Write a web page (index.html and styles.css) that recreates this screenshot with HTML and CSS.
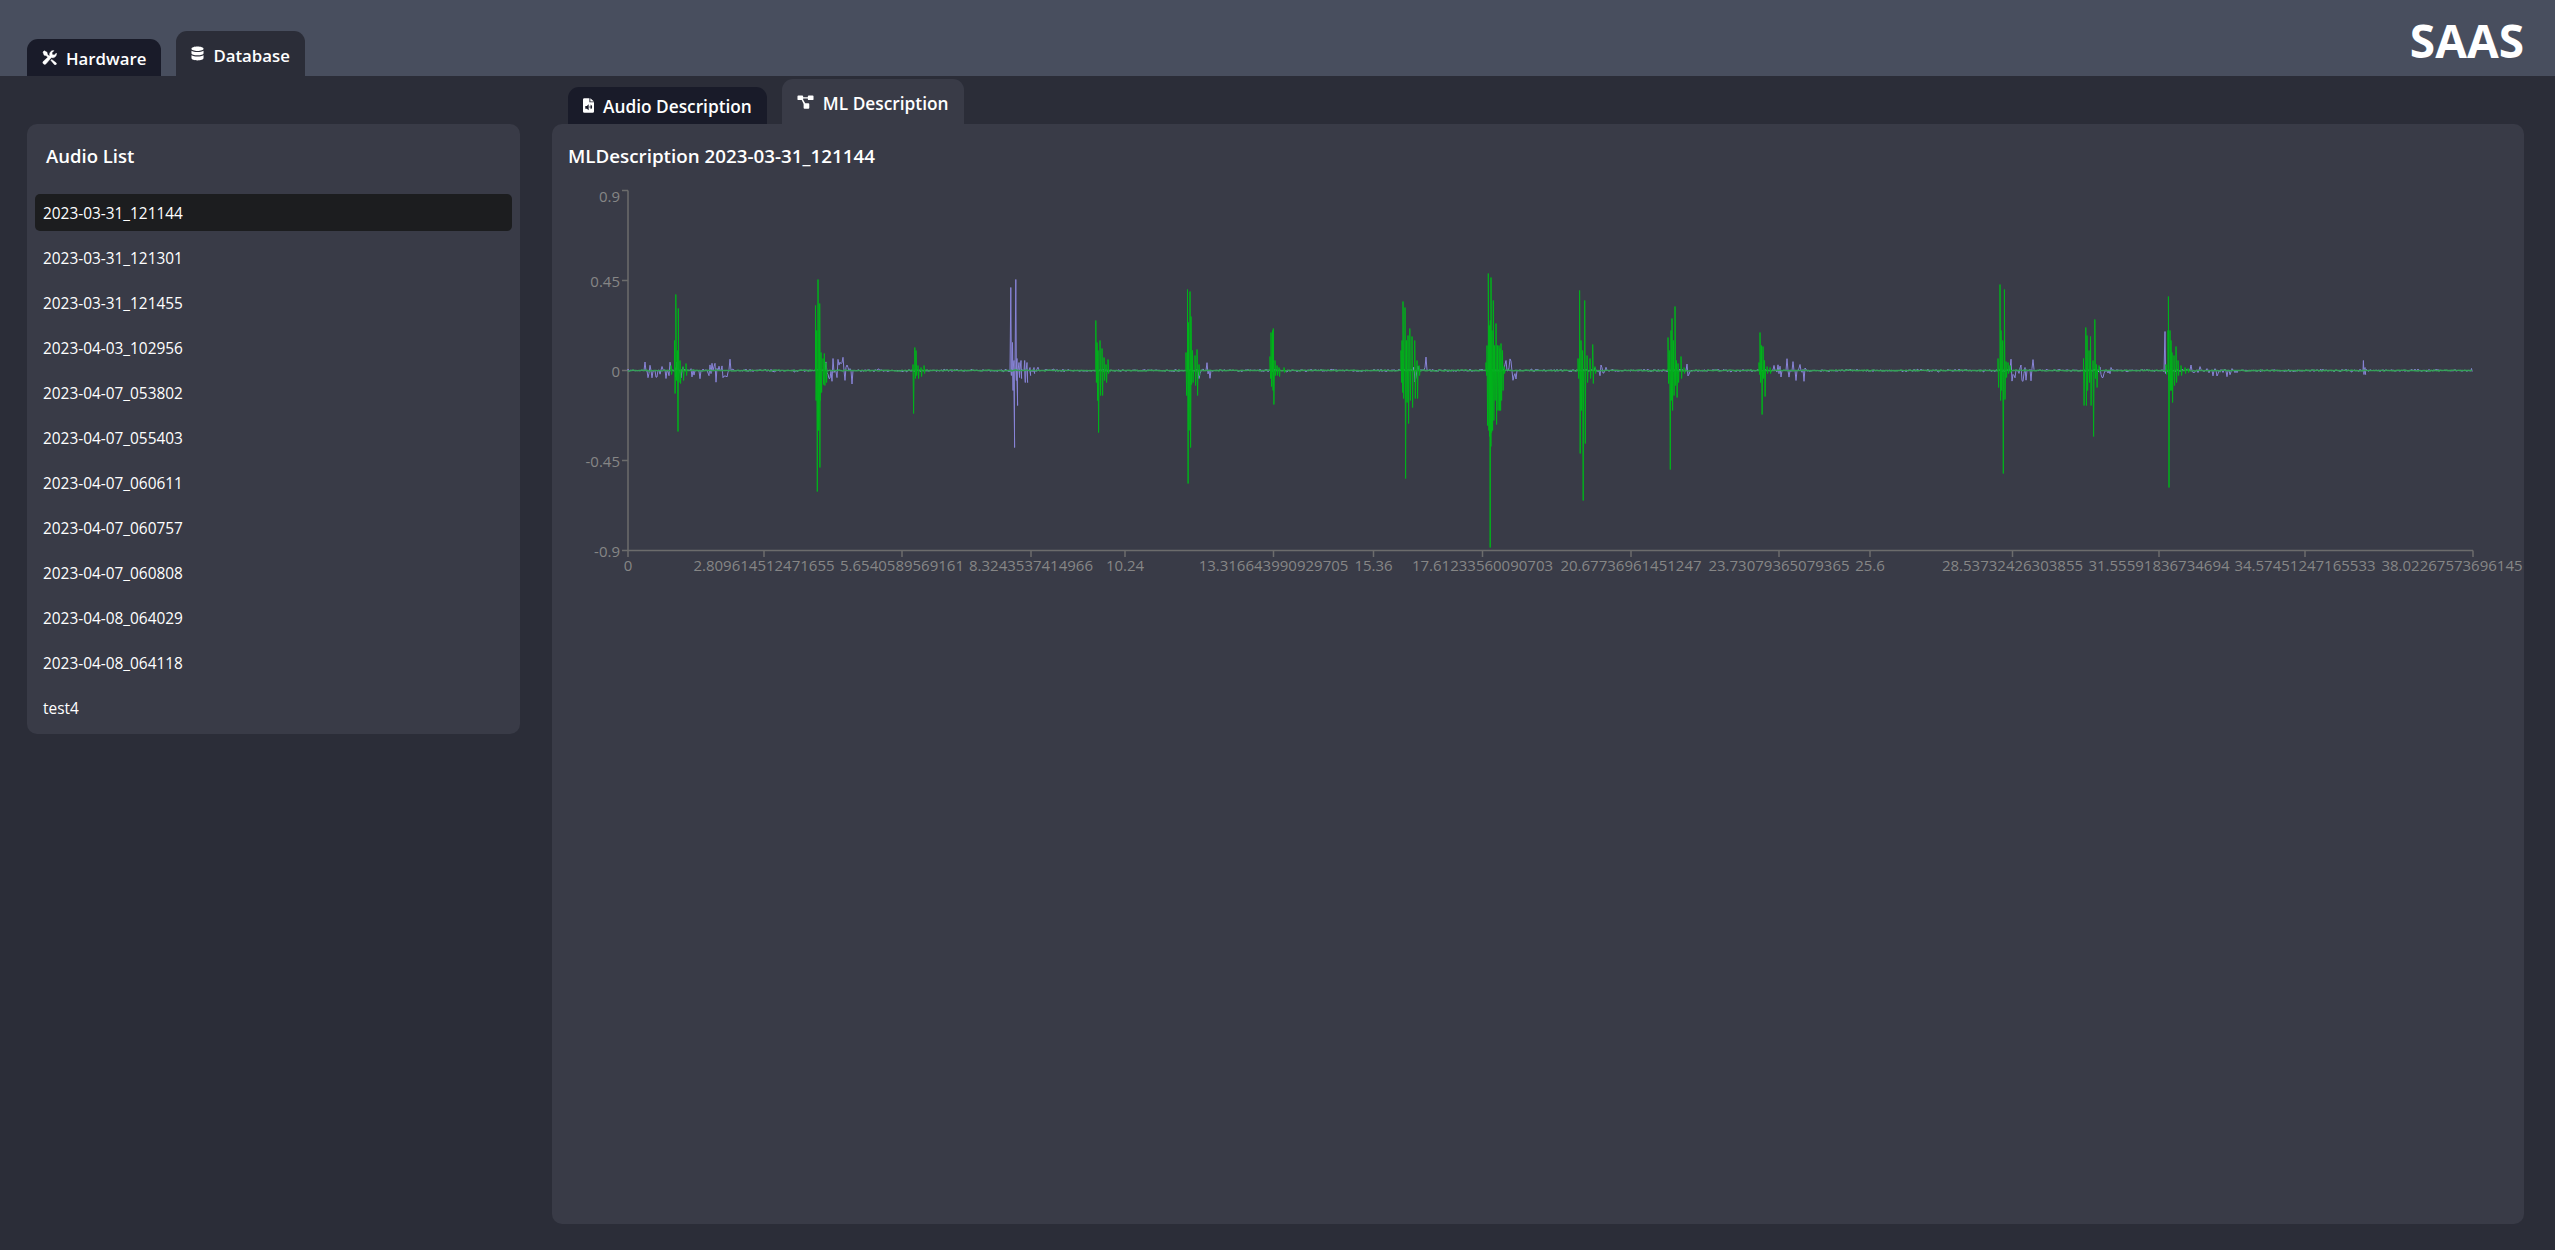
FILE: index.html
```html
<!DOCTYPE html>
<html lang="en">
<head>
    <meta charset="UTF-8">
    <meta name="viewport" content="width=device-width, initial-scale=1.0">
    <title>SAAS</title>
    <link rel="stylesheet" href="styles.css">
</head>
<body>
    <header class="topbar">
        <nav class="tabs main-tabs">
            <a class="tab">
                <svg class="icon tools-icon" viewBox="0 0 16 16"><path d="M1 2.2 2.4.8l3 1.7.3 2 3 3-1.4 1.4-3-3-2-.3zM11.8.6a4 4 0 0 1 .9.1L10.600 2.800l.4 2.200 2.200.4 2.100-2.100a4 4 0 0 1-5.300 4.700L4.300 14.700a1.700 1.700 0 0 1-2.800-2.600l6.800-6.300A4 4 0 0 1 11.800.6zM10.300 10l4.700 3.700a1.200 1.200 0 0 1-1.800 1.800L9.400 10.900z"/></svg>
                Hardware
            </a>
            <a class="tab active">
                <svg class="icon db-icon" viewBox="0 0 14 16"><path d="M7 .5c3.600 0 6.500 1 6.500 2.400S10.600 5.300 7 5.300.5 4.300.5 2.900 3.400.5 7 .5zM.5 5c1.400 1 3.900 1.500 6.500 1.500S12.100 6 13.500 5v2.600C13.500 9 10.600 10 7 10S.5 9 .5 7.600zM.5 9.800c1.400 1 3.900 1.500 6.500 1.500s5.100-.5 6.500-1.500v3.100C13.500 14.400 10.600 15.500 7 15.500S.5 14.400.5 12.900z"/></svg>
                Database
            </a>
        </nav>
        <h1 class="brand">SAAS</h1>
    </header>

    <div class="content">
        <aside class="card sidebar">
            <h2 class="card-title">Audio List</h2>
            <ul class="audio-list">
                <li class="selected">2023-03-31_121144</li>
                <li>2023-03-31_121301</li>
                <li>2023-03-31_121455</li>
                <li>2023-04-03_102956</li>
                <li>2023-04-07_053802</li>
                <li>2023-04-07_055403</li>
                <li>2023-04-07_060611</li>
                <li>2023-04-07_060757</li>
                <li>2023-04-07_060808</li>
                <li>2023-04-08_064029</li>
                <li>2023-04-08_064118</li>
                <li>test4</li>
            </ul>
        </aside>

        <main class="detail">
            <nav class="tabs sub-tabs">
                <a class="tab">
                    <svg class="icon file-icon" viewBox="0 0 12 16"><path fill-rule="evenodd" d="M1.500 0H7v4.500h5v10A1.500 1.500 0 0 1 10.500 16h-9A1.500 1.500 0 0 1 0 14.500v-13A1.500 1.500 0 0 1 1.500 0zM8 0l4 3.500H8zM2.500 8.500v3h1.700l2 1.800V6.700l-2 1.800zM7.300 8.200v2.600a1.500 1.500 0 0 0 0-2.600zM8.300 6.800v5.400a3 3 0 0 0 0-5.400z"/></svg>
                    Audio Description
                </a>
                <a class="tab active">
                    <svg class="icon graph-icon" viewBox="0 0 18 14"><path d="M.5 1a1 1 0 0 1 1-1h4a1 1 0 0 1 1 1v.9h5V1a1 1 0 0 1 1-1h4a1 1 0 0 1 1 1v3a1 1 0 0 1-1 1h-4a1 1 0 0 1-1-1v-.7h-5V4l-.1.4 2.300 3.900.3-.1h3a1 1 0 0 1 1 1v4a1 1 0 0 1-1 1h-4a1 1 0 0 1-1-1V9.200L5 5H1.500a1 1 0 0 1-1-1z"/></svg>
                    ML Description
                </a>
            </nav>
            <section class="card panel">
                <h2 class="panel-title">MLDescription 2023-03-31_121144</h2>
                <svg id="chart" class="chart" viewBox="568 180 1956 400">
                    <g class="axis">
                        <path d="M628 190.500V550.500M622 190.500H628M622 280.500H628M622 370.500H628M622 460.500H628M622 550.500H628"/>
                        <path d="M628 550.500H2473M628 550.500V557M764 550.500V557M902 550.500V557M1031 550.500V557M1125 550.500V557M1273.500 550.500V557M1373.500 550.500V557M1482.500 550.500V557M1631 550.500V557M1779 550.500V557M1870 550.500V557M2012.500 550.500V557M2159 550.500V557M2305 550.500V557M2473 550.500V557"/>
                    </g>
                    <g class="y-labels">
                        <text x="620" y="202">0.9</text>
                        <text x="620" y="287">0.45</text>
                        <text x="620" y="377">0</text>
                        <text x="620" y="467">-0.45</text>
                        <text x="620" y="557">-0.9</text>
                    </g>
                    <g class="x-labels">
                        <text x="628" y="571">0</text>
                        <text x="764" y="571">2.809614512471655</text>
                        <text x="902" y="571">5.6540589569161</text>
                        <text x="1031" y="571">8.3243537414966</text>
                        <text x="1125" y="571">10.24</text>
                        <text x="1273.500" y="571">13.316643990929705</text>
                        <text x="1373.500" y="571">15.36</text>
                        <text x="1482.500" y="571">17.61233560090703</text>
                        <text x="1631" y="571">20.67736961451247</text>
                        <text x="1779" y="571">23.73079365079365</text>
                        <text x="1870" y="571">25.6</text>
                        <text x="2012.500" y="571">28.53732426303855</text>
                        <text x="2159" y="571">31.55591836734694</text>
                        <text x="2305" y="571">34.57451247165533</text>
                        <text x="2452" y="571">38.02267573696145</text>
                    </g>
                </svg>
            </section>
        </main>
    </div>

    <script src="chart.js"></script>
</body>
</html>
```

FILE: styles.css
```css
:root {
    --bg: #2b2d38;
    --bar: #484e5e;
    --card: #393b47;
    --tab-off: #191b29;
}

* {
    box-sizing: border-box;
    margin: 0;
    padding: 0;
}

body {
    font-family: 'Open Sans', 'Noto Sans', sans-serif;
    background: var(--bg);
    color: #fff;
    height: 100vh;
    overflow: hidden;
}

.topbar {
    height: 76px;
    background: var(--bar);
    display: flex;
    justify-content: space-between;
    align-items: flex-end;
    padding: 0 31px 0 27px;
}

.brand {
    font-size: 46px;
    font-weight: 700;
    line-height: 52px;
    align-self: flex-start;
    margin-top: 14px;
}

.tabs {
    display: flex;
    align-items: flex-end;
    gap: 15px;
}

.tab {
    display: flex;
    align-items: center;
    gap: 9px;
    height: 37px;
    padding: 2px 15px 0;
    background: var(--tab-off);
    border-radius: 11px 11px 0 0;
    font-size: 17.3px;
    font-weight: 600;
    white-space: nowrap;
}

.main-tabs .tab {
    font-size: 16.8px;
}

.tab.active {
    height: 45px;
    padding-top: 3px;
    background: var(--bg);
}

.icon {
    width: 15px;
    height: 15px;
    margin-bottom: 3px;
    fill: #fff;
    flex: none;
}

.tools-icon path {
    stroke: #fff;
    stroke-width: 0.5;
}

.db-icon {
    width: 13px;
}

.file-icon {
    width: 11px;
}

.graph-icon {
    width: 17px;
    height: 14px;
}

.content {
    display: flex;
    gap: 32px;
    height: calc(100vh - 76px);
    padding: 0 31px 26px 27px;
}

.card {
    background: var(--card);
    border-radius: 10px;
}

.sidebar {
    width: 493px;
    flex: none;
    align-self: flex-start;
    margin-top: 48px;
    padding: 0 8px 8px;
}

.card-title {
    font-size: 18.5px;
    font-weight: 600;
    line-height: 24px;
    padding: 20px 11px 0;
    margin-bottom: 26px;
}

.audio-list {
    list-style: none;
    display: flex;
    flex-direction: column;
    gap: 8px;
}

.audio-list li {
    height: 37px;
    line-height: 39px;
    padding: 0 8px;
    border-radius: 5px;
    font-size: 15.4px;
}

.audio-list li.selected {
    background: #1c1d1f;
}

.detail {
    flex: 1;
    display: flex;
    flex-direction: column;
    padding-top: 3px;
}

.sub-tabs {
    padding-left: 16px;
}

.sub-tabs .tab.active {
    background: var(--card);
}

.panel {
    flex: 1;
    padding: 20px 0 0 16px;
}

.panel-title {
    font-size: 18.8px;
    font-weight: 600;
    line-height: 24px;
    height: 36px;
}

.chart {
    display: block;
    width: 1956px;
    height: 400px;
    overflow: visible;
}

.axis path {
    fill: none;
    stroke: #6c6c6c;
    stroke-width: 1.5;
}

.y-labels text,
.x-labels text {
    fill: #868686;
    font-size: 15px;
}

.y-labels text {
    text-anchor: end;
}

.x-labels text {
    text-anchor: middle;
}

.wave {
    fill: none;
    stroke-width: 1;
    stroke-linejoin: round;
}

.wave-raw {
    stroke: #8884d8;
}

.wave-ml {
    stroke: #00b31a;
}

.wave-base {
    stroke: #35a058;
    stroke-width: 1.4;
}
```

FILE: chart.js
```js
// waveform of the selected clip, x in chart px, y is distance from zero line
const ZERO = 370.5;
const START = 628;
const END = 2473;

// spikes: [x, up, down]
const mlBursts = [
    [[671, 5, 4], [674.500, 30, 23], [675.800, 76, 10], [677.400, 20, 61], [678.300, 62, 12], [680, 10, 13], [683, 4, 10], [686, 7, 5]],
    [[815.500, 65, 30], [816.700, 40, 121], [818, 91, 60], [819.300, 40, 97], [819.700, 67, 30], [821, 18, 22], [823, 12, 14], [824.300, 17, 15], [826, 8, 12]],
    [[913, 6, 43], [914.800, 23, 8], [916, 20, 5], [918, 5, 8], [921, 3, 6], [924, 5, 3]],
    [[1095.800, 50, 12], [1097, 28, 30], [1098, 20, 62], [1100, 30, 25], [1102, 22, 25], [1104, 13, 10], [1106, 6, 12], [1108, 11, 3]],
    [[1186, 18, 25], [1187.500, 81, 113], [1188.500, 48, 60], [1190, 79, 77], [1191, 54, 14], [1192.500, 20, 12], [1195, 15, 15], [1197, 21, 25], [1199, 6, 5]],
    [[1270, 14, 8], [1271, 38, 16], [1272.500, 40, 20], [1273.300, 42, 34], [1275, 10, 5], [1277, 5, 5], [1279, 3, 6], [1284, 3, 2]],
    [[1401, 20, 12], [1402, 30, 22], [1403, 69, 28], [1405, 63, 108], [1406.500, 30, 32], [1408, 35, 53], [1409.800, 42, 30], [1412, 34, 37], [1414.700, 30, 28], [1417, 10, 28], [1419, 5, 5]],
    [[1486, 8, 5], [1487, 25, 55], [1488.300, 97, 60], [1489, 40, 66], [1489.600, 45, 177], [1490.300, 50, 76], [1491, 93, 62], [1492, 40, 60], [1493.300, 70, 50], [1494.500, 25, 30], [1496, 47, 54], [1497.500, 25, 40], [1499, 25, 40], [1500, 22, 40], [1501, 27, 30], [1502.500, 20, 20], [1504, 4, 3]],
    [[1578, 12, 8], [1579.600, 80, 83], [1581, 30, 40], [1582.600, 20, 130], [1584.700, 70, 73], [1587, 15, 12], [1590, 12, 8], [1592.700, 26, 13], [1595, 4, 3]],
    [[1668, 33, 13], [1669.700, 20, 99], [1671, 40, 30], [1672, 52, 40], [1673.500, 30, 25], [1675, 64, 15], [1676.500, 10, 27], [1678, 7, 12], [1681, 14, 8], [1684, 3, 3]],
    [[1759, 8, 4], [1760, 38, 12], [1761.500, 25, 44], [1763, 24, 8], [1764.500, 10, 26], [1767, 4, 3], [1770, 3, 3]],
    [[1998, 12, 17], [2000, 86, 30], [2001, 40, 20], [2002.700, 30, 103], [2004.400, 81, 29], [2006, 9, 7], [2008, 8, 3], [2010, 5, 2]],
    [[2083.500, 12, 35], [2085.800, 43, 35], [2087, 35, 20], [2089, 20, 12], [2090.500, 34, 35], [2093, 10, 66], [2094.800, 51, 8], [2096.500, 6, 17], [2099, 5, 2]],
    [[2166, 6, 4], [2168, 40, 10], [2168.400, 74, 117], [2170, 40, 20], [2171, 30, 20], [2172, 18, 32], [2174, 15, 15], [2176, 24, 12], [2178, 10, 5], [2181, 5, 5], [2185, 3, 3], [2188, 2, 2]]
];

const rawBursts = [
    [[1010.800, 83, 5], [1012.500, 28, 20], [1014, 10, 77], [1015.800, 91, 10], [1017, 12, 35], [1019, 8, 7], [1021, 10, 8], [1024.700, 10, 12], [1027, 8, 12], [1030, 3, 5], [1034, 3, 3]],
    [[2165, 39, 3], [2363.400, 10, 4], [2365, 3, 4], [2471.500, 2, 1], [2472.800, 5, 0]]
];

// stretches of low noise on the raw line: [from, to, amplitude]
const rawNoise = [
    [645, 730, 12], [826, 852, 14], [1034, 1040, 5], [1112, 1125, 7], [1198, 1210, 9], [1413, 1426, 14], [1505, 1516, 12],
    [1595, 1610, 7], [1684, 1692, 7], [1770, 1806, 12], [2011, 2033, 12], [2099, 2115, 9], [2188, 2237, 7]
];

let seed = 7;
function rand() {
    seed = (seed * 16807) % 2147483647;
    return seed / 2147483647 - 0.5;
}

function noiseAt(x) {
    for (const [from, to, amp] of rawNoise) {
        if (x >= from && x <= to) return amp;
    }
    return 1.5;
}

function buildPath(bursts, amp) {
    const spikes = bursts.flat().sort((a, b) => a[0] - b[0]);
    let d = `M${START} ${ZERO}`;
    let i = 0;
    for (let x = START; x < END; x += 1) {
        while (i < spikes.length && spikes[i][0] <= x) {
            const [sx, up, down] = spikes[i++];
            d += `L${sx} ${ZERO - up}L${sx + 0.6} ${ZERO + down}`;
        }
        // cubed so most samples stay small and a few stick out
        const n = rand() * 2;
        d += `L${x} ${(ZERO + n * n * n * amp(x)).toFixed(1)}`;
    }
    return d;
}

function addLine(cls, d) {
    const path = document.createElementNS('http://www.w3.org/2000/svg', 'path');
    path.setAttribute('class', `wave ${cls}`);
    path.setAttribute('d', d);
    document.getElementById('chart').appendChild(path);
}

addLine('wave-raw', buildPath(rawBursts, noiseAt));
addLine('wave-base', buildPath([], () => 0.8));
addLine('wave-ml', mlBursts.flat()
    .sort((a, b) => a[0] - b[0])
    .reduce((d, [x, up, down]) => `${d}M${x} ${ZERO}L${x} ${ZERO - up}L${x + 0.6} ${ZERO + down}L${x + 1} ${ZERO}`, ''));
```
